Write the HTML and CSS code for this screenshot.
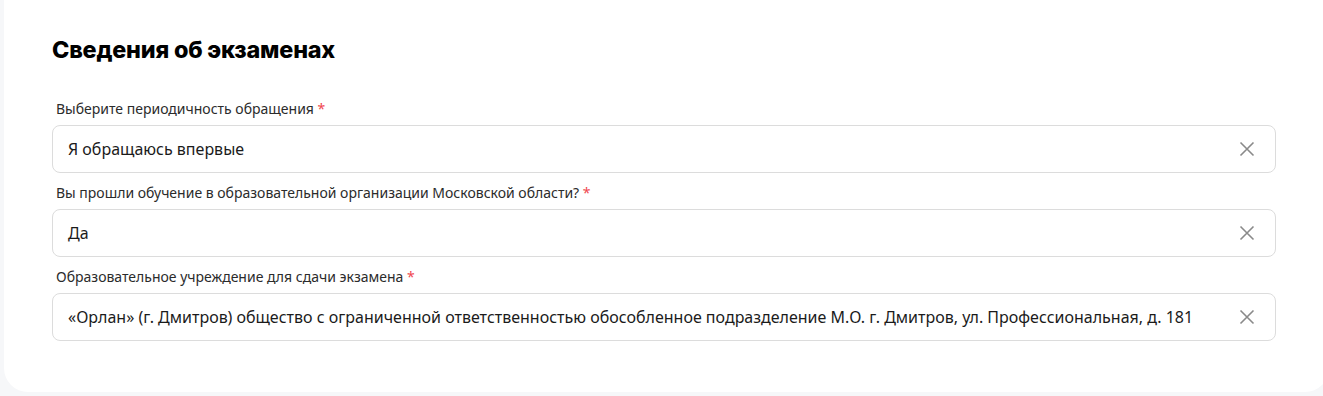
FILE: index.html
```html
<!DOCTYPE html>
<html lang="ru">
<head>
    <meta charset="UTF-8">
    <meta name="viewport" content="width=device-width, initial-scale=1.0">
    <title>Сведения об экзаменах</title>
    <link rel="stylesheet" href="styles.css">
</head>
<body>
    <section class="card">
        <h2 class="card-title">Сведения об экзаменах</h2>

        <div class="field">
            <label class="field-label">Выберите периодичность обращения <span class="req">*</span></label>
            <div class="field-box">
                <span class="field-value">Я обращаюсь впервые</span>
                <svg class="clear-icon" viewBox="0 0 16 16" width="16" height="16"><path d="M1.5 1.5L14.5 14.5M14.5 1.5L1.5 14.5"/></svg>
            </div>
        </div>

        <div class="field">
            <label class="field-label">Вы прошли обучение в образовательной организации Московской области? <span class="req">*</span></label>
            <div class="field-box">
                <span class="field-value">Да</span>
                <svg class="clear-icon" viewBox="0 0 16 16" width="16" height="16"><path d="M1.5 1.5L14.5 14.5M14.5 1.5L1.5 14.5"/></svg>
            </div>
        </div>

        <div class="field">
            <label class="field-label">Образовательное учреждение для сдачи экзамена <span class="req">*</span></label>
            <div class="field-box">
                <span class="field-value">«Орлан» (г. Дмитров) общество с ограниченной ответственностью обособленное подразделение М.О. г. Дмитров, ул. Профессиональная, д. 181</span>
                <svg class="clear-icon" viewBox="0 0 16 16" width="16" height="16"><path d="M1.5 1.5L14.5 14.5M14.5 1.5L1.5 14.5"/></svg>
            </div>
        </div>
    </section>
</body>
</html>
```

FILE: styles.css
```css
body {
    margin: 0;
    background: #f6f7f9;
    font-family: "Noto Sans", "Open Sans", sans-serif;
    color: #1b1b1b;
    overflow: hidden;
}

.card {
    background: #ffffff;
    margin: -24px -6px 0 4px;
    padding: 58px 53px 40px 48px;
    border-radius: 0 0 24px 24px;
    box-sizing: border-box;
    height: 416px;
}

.card-title {
    margin: 0 0 34px 0;
    font-family: "Inter", sans-serif;
    font-size: 23.4px;
    font-weight: 800;
    line-height: 32px;
    letter-spacing: -0.2px;
    color: #000;
}

.field {
    display: flex;
    flex-direction: column;
    margin-bottom: 11px;
}

.field-label {
    font-size: 14px;
    line-height: 18px;
    color: #2b2b2b;
    padding-left: 4px;
    margin-bottom: 7px;
}

.req {
    color: #f0474f;
}

.field-box {
    display: flex;
    align-items: center;
    justify-content: space-between;
    height: 48px;
    box-sizing: border-box;
    border: 1px solid #dcdcdc;
    border-radius: 8px;
    padding: 0 20px 0 15px;
}

.field-value {
    font-size: 16px;
    color: #1b1b1b;
}

.clear-icon {
    fill: none;
    stroke: #8a8a8a;
    stroke-width: 1.6;
}
```
